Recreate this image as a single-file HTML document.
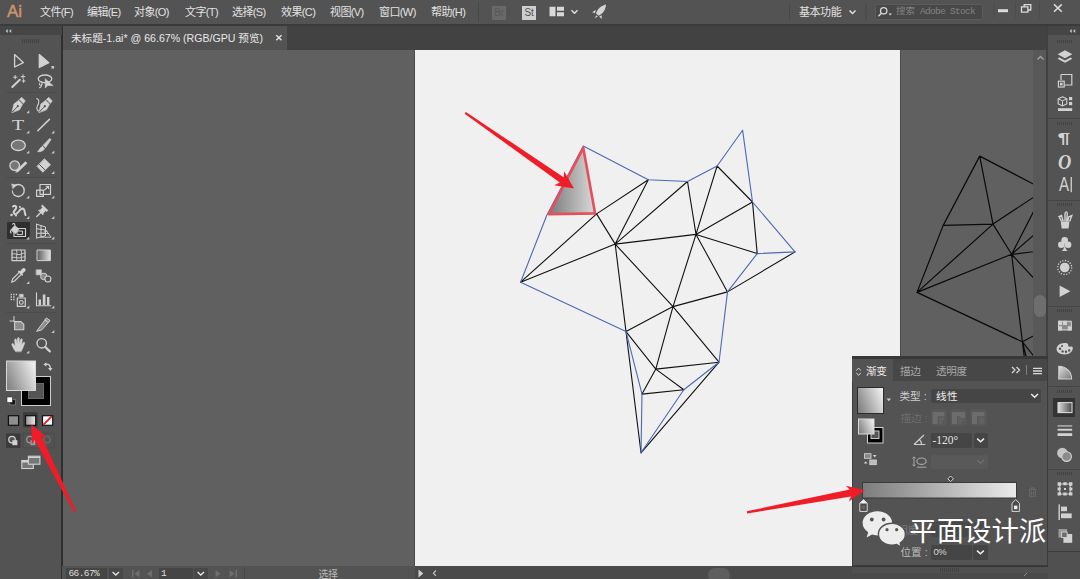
<!DOCTYPE html>
<html lang="zh-CN">
<head>
<meta charset="utf-8">
<title>Adobe Illustrator</title>
<style>
*{box-sizing:border-box;margin:0;padding:0}
html,body{width:1080px;height:579px;overflow:hidden;background:#606060}
body{position:relative;font-family:"Liberation Sans","Noto Sans CJK SC",sans-serif;font-size:12px;color:#dcdcdc}
.abs{position:absolute}
svg{position:absolute;left:0;top:0;overflow:visible}
#menubar{left:0;top:0;width:1080px;height:24px;background:#535353}
#menuline{left:0;top:24px;width:1080px;height:2px;background:#3a3a3a}
.mi{position:absolute;top:2px;height:20px;line-height:20px;font-size:11px;letter-spacing:-.6px;color:#e2e2e2;white-space:nowrap}
#ai{left:7px;top:0;height:24px;line-height:24px;font-size:17px;font-weight:normal;-webkit-text-stroke:.45px #cc966c;color:#cc966c;letter-spacing:0}
#tabbar{left:62px;top:26px;width:986px;height:24px;background:#424242}
#tab{left:63px;top:26px;width:224px;height:24px;background:#535353}
#tabtxt{left:71px;top:28px;height:20px;line-height:20px;font-size:10.6px;color:#e8e8e8;white-space:nowrap}
#tabx{left:273px;top:28px;height:20px;line-height:20px;font-size:11px;color:#e8e8e8;font-weight:bold}
#canvas{left:62px;top:50px;width:971px;height:517px;background:#606060;overflow:hidden}
#artboard{left:414px;top:50px;width:487px;height:516px;background:#f0f0f0;border-left:1px solid #4a4a4a;border-right:1px solid #4a4a4a}
#vscroll{left:1033px;top:50px;width:14px;height:517px;background:#585858}
#vthumb{left:1034px;top:295px;width:12px;height:22px;border-radius:6px;background:#6e6e6e}
#tools{left:0;top:26px;width:63px;height:553px;background:#535353;border-right:2px solid #2f2f2f}
#toolshdr{left:0;top:26px;width:62px;height:9px;background:#454545}
#rdock{left:1046px;top:26px;width:34px;height:553px;background:#535353;border-left:2px solid #404040}
#rdockhdr{left:1048px;top:26px;width:32px;height:9px;background:#454545}
#status{left:62px;top:567px;width:986px;height:12px;background:#535353}
.sep{position:absolute;height:1px;background:#454545}
.grip{position:absolute;height:3px;background:repeating-linear-gradient(90deg,#424242 0 1px,transparent 1px 2px)}
.gripl{position:absolute;height:3px;background:repeating-linear-gradient(90deg,#686868 0 1px,transparent 1px 2px)}
/* gradient panel */
#gp{left:852px;top:356px;width:196px;height:210px;background:#535353;border:1px solid #3c3c3c;border-top:3px solid #383838}
#gphdr{left:852px;top:359px;width:195px;height:22px;background:#474747}
#gptab{left:852px;top:359px;width:41px;height:23px;background:#535353}
.pt{position:absolute;font-size:11px;line-height:16px;height:16px;white-space:nowrap;color:#dedede}
.fld{position:absolute;background:#454545;border-radius:2px}
#wm{left:909.3px;top:514.7px;font-size:27.4px;line-height:34px;height:34px;color:#fff;white-space:nowrap;letter-spacing:0}
</style>
</head>
<body>
<div class="abs" id="canvas"></div>
<div class="abs" id="artboard"></div>
<svg width="1080" height="579" viewBox="0 0 1080 579">
<defs>
<linearGradient id="trig" x1="0" y1="0" x2="1" y2="0"><stop offset="0" stop-color="#7a7a7a"/><stop offset="1" stop-color="#dadada"/></linearGradient>
<clipPath id="cv"><rect x="62" y="50" width="971" height="517"/></clipPath>
</defs>
<g clip-path="url(#cv)">
<path d="M917.0 292.4 L993.0 224.1 M917.0 292.4 L1011.6 254.3 M993.0 224.1 L1044.7 189.9 M993.0 224.1 L1011.6 254.3 M1044.7 189.9 L1011.6 254.3 M1083.9 191.7 L1011.6 254.3 M1083.9 191.7 L1092.4 244.6 M1113.5 176.2 L1092.4 244.6 M1113.5 176.2 L1148.9 212.2 M1148.9 212.2 L1092.4 244.6 M1148.9 212.2 L1153.6 263.8 M1092.4 244.6 L1153.6 263.8 M1092.4 244.6 L1011.6 254.3 M1191.4 262.1 L1123.9 302.1 M1011.6 254.3 L1069.4 316.8 M1011.6 254.3 L1022.4 341.8 M1092.4 244.6 L1069.4 316.8 M1092.4 244.6 L1123.9 302.1 M1069.4 316.8 L1123.9 302.1 M1069.4 316.8 L1022.4 341.8 M1069.4 316.8 L1115.4 372.4 M1069.4 316.8 L1052.2 379.3 M1022.4 341.8 L1052.2 379.3 M1022.4 341.8 L1037.4 463.0 M1052.2 379.3 L1115.4 372.4 M1052.2 379.3 L1080.2 400.0 M1052.2 379.3 L1038.4 404.3 M1038.4 404.3 L1080.2 400.0 M1115.4 372.4 L1037.4 463.0 M917.0 292.4 L943.2 225.4 M943.2 225.4 L979.7 156.1 M979.7 156.1 L1044.7 189.9 M1044.7 189.9 L1083.9 191.7 M1083.9 191.7 L1113.5 176.2 M1113.5 176.2 L1139.0 140.4 M1139.0 140.4 L1148.9 212.2 M1148.9 212.2 L1191.4 262.1 M1191.4 262.1 L1153.6 263.8 M1153.6 263.8 L1123.9 302.1 M1123.9 302.1 L1115.4 372.4 M1115.4 372.4 L1080.2 400.0 M1080.2 400.0 L1037.4 463.0 M1037.4 463.0 L1038.4 404.3 M1038.4 404.3 L1022.4 341.8 M1022.4 341.8 L917.0 292.4 M979.7 156.1 L993.0 224.1 M943.2 225.4 L993.0 224.1" stroke="#0a0a0a" stroke-width="1.2" fill="none" stroke-linecap="round"/>
</g>
<path d="M520.6 282.2 L596.6 213.9 M520.6 282.2 L615.2 244.1 M596.6 213.9 L648.3 179.7 M596.6 213.9 L615.2 244.1 M648.3 179.7 L615.2 244.1 M687.5 181.5 L615.2 244.1 M687.5 181.5 L696.0 234.4 M717.1 166.0 L696.0 234.4 M717.1 166.0 L752.5 202.0 M752.5 202.0 L696.0 234.4 M752.5 202.0 L757.2 253.6 M696.0 234.4 L757.2 253.6 M696.0 234.4 L615.2 244.1 M795.0 251.9 L727.5 291.9 M615.2 244.1 L673.0 306.6 M615.2 244.1 L626.0 331.6 M696.0 234.4 L673.0 306.6 M696.0 234.4 L727.5 291.9 M673.0 306.6 L727.5 291.9 M673.0 306.6 L626.0 331.6 M673.0 306.6 L719.0 362.2 M673.0 306.6 L655.8 369.1 M626.0 331.6 L655.8 369.1 M626.0 331.6 L641.0 452.8 M655.8 369.1 L719.0 362.2 M655.8 369.1 L683.8 389.8 M655.8 369.1 L642.0 394.1 M642.0 394.1 L683.8 389.8 M719.0 362.2 L641.0 452.8" stroke="#111" stroke-width="1.1" fill="none" stroke-linecap="round"/>
<path d="M520.6 282.2 L546.8 215.2 M546.8 215.2 L583.3 145.9 M583.3 145.9 L648.3 179.7 M648.3 179.7 L687.5 181.5 M687.5 181.5 L717.1 166.0 M717.1 166.0 L742.6 130.2 M742.6 130.2 L752.5 202.0 M752.5 202.0 L795.0 251.9 M795.0 251.9 L757.2 253.6 M757.2 253.6 L727.5 291.9 M727.5 291.9 L719.0 362.2 M719.0 362.2 L683.8 389.8 M683.8 389.8 L641.0 452.8 M641.0 452.8 L642.0 394.1 M642.0 394.1 L626.0 331.6 M626.0 331.6 L520.6 282.2" stroke="#4a68b5" stroke-width="1.1" fill="none" stroke-linecap="round"/>
<polygon points="583.3,147.9 548.8,214.2 595.1,213.4" fill="url(#trig)" stroke="#e84e5a" stroke-width="2.6" stroke-linejoin="round"/>
</svg>
<div class="abs" id="vscroll"></div>
<div class="abs" id="vthumb"></div>
<div class="abs" id="menubar"></div>
<div class="abs" id="menuline"></div>
<div class="abs" id="tabbar"></div>
<div class="abs" id="tab"></div>
<div class="abs" id="tabtxt">未标题-1.ai* @ 66.67% (RGB/GPU 预览)</div>
<svg width="1080" height="60" viewBox="0 0 1080 60"><path d="M276.300 35.200 l5.200 5 M281.500 35.200 l-5.200 5" stroke="#e4e4e4" stroke-width="1.400"/></svg>
<div class="abs mi" id="ai">Ai</div>
<div class="mi" style="left:40px">文件(F)</div>
<div class="mi" style="left:87px">编辑(E)</div>
<div class="mi" style="left:134px">对象(O)</div>
<div class="mi" style="left:185px">文字(T)</div>
<div class="mi" style="left:232px">选择(S)</div>
<div class="mi" style="left:281px">效果(C)</div>
<div class="mi" style="left:330px">视图(V)</div>
<div class="mi" style="left:379px">窗口(W)</div>
<div class="mi" style="left:431px">帮助(H)</div>
<div class="abs" style="left:478px;top:2px;width:1px;height:20px;background:#484848"></div>
<div class="abs" style="left:492px;top:5.500px;width:14px;height:14px;background:#696969;color:#585858;font-size:10px;line-height:14px;text-align:center;letter-spacing:-.3px">Br</div>
<div class="abs" style="left:522px;top:5.500px;width:14px;height:14px;background:#cfcfcf;color:#535353;font-size:10px;line-height:14px;text-align:center;letter-spacing:-.3px">St</div>
<svg width="1080" height="26" viewBox="0 0 1080 26">
<path d="M549.500 6.700h6v9.600h-6z M557 6.700h7v4h-7z M557 12.200h7v4.100h-7z" fill="#d8d8d8"/>
<path d="M571.500 10.300 l3 3 l3-3" stroke="#e0e0e0" stroke-width="1.500" fill="none"/>
<path d="M606 4.600 C601.500 5.500 597.500 9 596 13.500 L598.800 15.800 C603 13.800 605.800 9.500 606 4.600Z M595.800 9.800 L592.200 12.200 L595 13.200 Z M601.800 15.200 L601.600 19 L599.200 16.600 Z M596.400 15.200 L594.600 18.200 L597.800 16.600Z" fill="#d4d4d4"/>
<path d="M789.500 3v18M866 3v18" stroke="#484848" stroke-width="1"/>
<path d="M849.500 10.500 l3 3 l3-3" stroke="#e0e0e0" stroke-width="1.500" fill="none"/>
<rect x="875.500" y="4.500" width="107" height="15" rx="2" fill="#484848" stroke="#5c5c5c" stroke-width="1"/>
<circle cx="883.700" cy="10.800" r="3.200" stroke="#d8d8d8" stroke-width="1.300" fill="none"/>
<path d="M881.400 13.300 L878.400 16.300" stroke="#d8d8d8" stroke-width="1.500"/>
<path d="M888.500 13.500 h3.400 l-1.700 2z" fill="#d8d8d8"/>
<path d="M994 2v16M1015.500 2v16M1039.500 2v16" stroke="#4c4c4c" stroke-width="1"/>
<path d="M998 9.200h10v3h-10z" fill="#dcdcdc"/>
<path d="M1021.500 6.800h6.400v5.400h-6.400z M1024.200 6.600v-2h6.600v5.400h-2.600" stroke="#dcdcdc" stroke-width="1.300" fill="none"/>
<path d="M1054 4.400 l7.800 7.400 M1061.800 4.400 l-7.800 7.400" stroke="#dcdcdc" stroke-width="1.500"/>
</svg>
<div class="mi" style="left:799px;letter-spacing:-.45px">基本功能</div>
<div class="abs" style="left:896px;top:4px;height:16px;line-height:16px;font-family:'Liberation Mono','Noto Sans CJK SC',monospace;font-size:9.5px;letter-spacing:-.7px;color:#828282;white-space:nowrap"><span style="letter-spacing:0">搜索</span> Adobe Stock</div>

<div class="abs" id="tools"></div>
<div class="abs" id="toolshdr"></div>
<div class="abs" style="left:7px;top:222px;width:23px;height:17px;background:#2f2f2f;border-radius:1px"></div>
<div class="grip" style="left:22px;top:39px;width:17px;height:3.500px"></div>
<div class="sep" style="background:#4b4b4b;left:6px;top:92px;width:50px"></div>
<div class="sep" style="background:#4b4b4b;left:6px;top:177px;width:50px"></div>
<div class="sep" style="background:#4b4b4b;left:6px;top:243px;width:50px"></div>
<div class="sep" style="background:#4b4b4b;left:6px;top:312px;width:50px"></div>
<svg width="64" height="579" viewBox="0 0 64 579" fill="none" stroke="none">
<defs>
<linearGradient id="tg1" x1="0" y1="0" x2="1" y2="0"><stop offset="0" stop-color="#5e5e5e"/><stop offset="1" stop-color="#e4e4e4"/></linearGradient>
<linearGradient id="tg2" x1="0" y1="0" x2="1" y2="0"><stop offset="0" stop-color="#929292"/><stop offset="1" stop-color="#ececec"/></linearGradient>
<linearGradient id="fillg" x1="0" y1="0.7" x2="1" y2="0.3"><stop offset="0" stop-color="#858585"/><stop offset="1" stop-color="#ececec"/></linearGradient>
</defs>
<!-- collapse arrows -->
<path d="M7.8 29 L5.6 31 L7.800 33 Z M11.2 29 L9 31 L11.2 33 Z" fill="#c4c4c4"/>
<!-- corner flyout triangles -->
<g fill="#c8c8c8">
<path d="M51.5 66h2.6v2.6h-2.6z"/>
<path d="M29.3 110.300 v3h-3z M29.3 130.500 v3h-3z M54.300 130.500 v3h-3z M29.3 150.500 v3h-3z M54.300 150.500 v3h-3z M29.3 171 v3h-3z M54.300 171 v3h-3z M29.3 195.500 v3h-3z M54.300 195.500 v3h-3z M29.3 216 v3h-3z M54.300 216 v3h-3z M29.3 236.500 v3h-3z M54.300 236.500 v3h-3z M29.3 281 v3h-3z M29.3 305.500 v3h-3z M54.300 305.500 v3h-3z M54.300 330 v3h-3z M29.3 350.500 v3h-3z"/>
</g>
<g stroke="#d2d2d2" stroke-width="1.3" stroke-linejoin="round" stroke-linecap="round">
<!-- selection -->
<path d="M14.6 54.600 V67 L23.300 62.600 Z"/>
<!-- direct selection -->
<path d="M39.300 54.600 V67.500 L48.800 62.700 Z" fill="#d2d2d2"/>
<!-- magic wand -->
<path d="M12.300 87 L19.800 79.800" stroke-width="2"/>
<path d="M15.200 75.500v3.400M13.500 77.200h3.400M23 74.800v3.600M21.200 76.600h3.600M23.600 79.600v2.800M22.200 81h2.800" stroke-width="1"/>
<!-- lasso -->
<ellipse cx="45" cy="78.800" rx="6.800" ry="3.800"/>
<path d="M40 81.500c2.500 0 3 2.800 1.200 3.600c-1.300 .5 -2.400-.8-1.500-1.800M41.500 85.200c0 1.200-.8 2.200-2 2.600" stroke-width="1.100"/>
<path d="M45.200 79 L45.200 88 L47.800 85.600 L52.800 85.600 Z" fill="#d2d2d2" stroke-width=".6"/>
<!-- pen -->
<path d="M12 112.200 L14 104 L18.600 100.400 L22.400 104.400 L19.500 109.600 Z" fill="#d2d2d2" stroke-width=".8"/>
<path d="M19.600 99.300 L21.800 97.400 L25.200 100.900 L23.400 103.200 Z" fill="#d2d2d2" stroke-width=".8"/>
<path d="M12.400 111.800 L17.300 106.800" stroke="#535353" stroke-width="1"/>
<circle cx="17.800" cy="106.200" r="1.100" fill="#535353" stroke="none"/>
<!-- curvature pen -->
<path d="M39 112.200 L41 104 L45.600 100.400 L49.400 104.400 L46.500 109.600 Z" fill="#d2d2d2" stroke-width=".8"/>
<path d="M46.600 99.300 L48.800 97.400 L52.200 100.900 L50.400 103.200 Z" fill="#d2d2d2" stroke-width=".8"/>
<path d="M39.400 111.800 L44.300 106.800" stroke="#535353" stroke-width="1"/>
<circle cx="44.800" cy="106.200" r="1.100" fill="#535353" stroke="none"/>
<path d="M36.800 98.500c3 1.200 2.200 4.500.8 7c-1.200 2.300-1 5 1.200 5.800" stroke-width="1.100"/>
<!-- type -->
<text transform="translate(11.900 130.200) scale(1.28 1)" font-family="'Liberation Serif',serif" font-size="15.600" fill="#d2d2d2" stroke="none">T</text>
<!-- line -->
<path d="M37.800 130.800 L49.400 119.400" stroke-width="1.500"/>
<!-- ellipse -->
<ellipse cx="18.300" cy="145.300" rx="7" ry="5.200" fill="#777"/>
<!-- brush -->
<path d="M50 138.600 L51 139.600 L45.600 147.600 L43.200 145.600 Z" fill="#d2d2d2" stroke-width=".7"/>
<path d="M42.400 146.600 L44.600 148.600 C43.600 151.200 40 152 37.600 151.600 C39.600 150.400 39.600 147.600 42.400 146.600Z" fill="#d2d2d2" stroke-width=".7"/>
<!-- shaper -->
<circle cx="14.700" cy="165.600" r="4.800" fill="#777"/>
<path d="M17 171.200 L26.400 162.200" stroke-width="2.600" stroke-linecap="butt"/>
<path d="M16 172.300 l1.800-.4l-1.300-1.400z" fill="#d2d2d2" stroke-width=".5"/>
<!-- eraser -->
<path d="M44.600 159 L50.500 164.800 L42.800 172.200 L37.200 166.600 Z" fill="#d2d2d2" stroke-width=".8"/>
<path d="M39.500 164.500 L45 170" stroke="#535353" stroke-width="1"/>
<!-- rotate -->
<path d="M14 186.200 A6 6 0 1 1 14.600 195.300" stroke-width="1.400"/>
<path d="M11.800 184 L16.600 185 L13 188.600 Z" fill="#d2d2d2" stroke-width=".5"/>
<path d="M14.600 195.300 A6 6 0 0 1 12.400 191" stroke-dasharray="1 1.300" stroke-width="1.300"/>
<!-- scale -->
<rect x="40" y="184.500" width="10.500" height="9.800" stroke-width="1.200"/>
<rect x="36.600" y="190.200" width="6.800" height="6.200" stroke-width="1.200"/>
<path d="M44.500 190 L48.500 186.300 M46 186.300 H48.600 V188.800" stroke-width="1.100"/>
<!-- puppet warp -->
<path d="M13 206.500c2-1.500 4 0 3 2s-3.500 3-2 5s4-1 5.500-3s3.500-2.500 4.500-1s.5 3.500 1.500 5.500" stroke-width="2"/>
<circle cx="11.500" cy="215" r="1.300" fill="#d2d2d2" stroke="none"/><circle cx="20" cy="207" r="1.100" fill="#d2d2d2" stroke="none"/><circle cx="16" cy="215.500" r="1.100" fill="#d2d2d2" stroke="none"/>
<!-- pin -->
<path d="M42.500 205 L48 210.500 L46.500 211.500 L45.500 210.800 L43.300 213.200 L43 215 L38.300 210.200 L40.200 210 L42.500 207.600 L41.600 206.600 Z" fill="#d2d2d2" stroke-width=".6"/>
<path d="M40.500 212.800 L36.800 216.400" stroke-width="1.400"/>
<!-- live paint bucket -->
<rect x="14" y="228.500" width="11.500" height="8" stroke-width="1.100"/>
<rect x="17.500" y="231" width="5" height="3.600" stroke-width="1" />
<path d="M11 229.800 L14.600 225.600 L19 229 L15.600 233.400 Z" fill="#d2d2d2" stroke-width=".7"/>
<path d="M12.500 224.200 c1-1.400 2.600-.6 2.400 1.200" stroke-width="1.100"/>
<path d="M11 230.500c-.8 1.200-.8 2 .1 2.400" stroke-width="1.200"/>
<!-- perspective grid -->
<path d="M36.600 224.200 V238 M36.600 224.200 L45.500 227 V235.800 L36.600 238 M41 225.600 V236.900 M36.600 228.800 L45.500 230 M36.600 233.400 L45.500 233" stroke-width="1"/>
<path d="M45.500 229.500 L50.600 236.600 M41 237.200 H50.800 M43 233.500 H48.500 M44.500 231.300 H47" stroke-width=".9"/>
<!-- mesh -->
<rect x="12" y="250" width="13" height="10.600" stroke-width="1.200"/>
<path d="M12 254c3-1.500 5 1.500 8 .5s3.500-1.500 5-1.500M12 257.500c3-1 5 1 8 .3s3.500-1 5-1M16.500 250c1.500 3-1 6 .5 10.600M21 250c1.500 3-.5 6 .5 10.600" stroke-width=".9"/>
<!-- gradient tool -->
<rect x="37.400" y="250" width="13" height="10.600" fill="url(#tg1)" stroke-width="1"/>
<!-- eyedropper -->
<path d="M11.600 282.200 L12.600 279 L19.500 272.200 L21.500 274.200 L14.600 281 Z" stroke-width="1.100"/>
<path d="M18.800 271.400 L22.300 274.900 M20 272.600 L22.800 269.200 C24 268 25.600 269.600 24.600 270.800 L21.200 273.800" stroke-width="1.500" fill="#d2d2d2"/>
<!-- blend -->
<rect x="36.400" y="269.800" width="5" height="5" fill="#d2d2d2" stroke-width=".6"/>
<circle cx="43.800" cy="276.400" r="3.300" fill="#8a8a8a" stroke-width="1"/>
<circle cx="47.900" cy="279" r="3" fill="#535353" stroke-width="1.100"/>
<!-- symbol sprayer -->
<rect x="17.300" y="298" width="8" height="8.400" stroke-width="1.200"/>
<rect x="19.600" y="294.300" width="3.600" height="2.600" fill="#d2d2d2" stroke-width=".6"/>
<circle cx="21.300" cy="302.400" r="1.900" stroke-width="1.100"/>
<path d="M10.600 294.500h1.300M13.200 294.500h1.300M15.800 294.500h1.300M10.600 297h1.300M13.200 297h1.300M10.600 299.500h1.300M13.200 299.500h1.300" stroke-width="1.300" stroke-linecap="butt"/>
<!-- graph -->
<path d="M36.500 292.800 V305.800 H50.800" stroke-width="1.100"/>
<path d="M38.600 299.500h2.400v5.600h-2.400z M42.800 294.600h2.600v10.500h-2.600z M47 297h2.400v8.100h-2.400z" fill="#d2d2d2" stroke="none"/>
<!-- artboard -->
<path d="M14 316.500 V321 M10 321 H14" stroke-width="1"/>
<path d="M14.600 321.600 H21 L23.800 324.400 V329.800 H14.600 Z" fill="#8c8c8c" stroke-width="1.100"/>
<!-- slice -->
<path d="M36.800 331 L46.400 318 L50 320.600 L42 329.600 Z" fill="#8c8c8c" stroke-width="1"/>
<path d="M45 320 L48.400 322.400" stroke-width="1"/>
<!-- hand -->
<path d="M15.500 351.500 C13.500 349 12.500 346.500 11.800 344.600 C11.500 343.400 13 343 13.800 344.200 L15.200 346.200 L14.600 340 C14.500 338.600 16.200 338.500 16.400 339.800 L17.200 344 L17.400 338.600 C17.500 337.200 19.300 337.200 19.300 338.600 L19.400 344 L20.600 339.400 C21 338.200 22.500 338.600 22.300 339.900 L21.600 345 L23.200 342.600 C24 341.600 25.200 342.400 24.600 343.600 C23.500 346 22.800 349 21.200 351.500 Z" fill="#d2d2d2" stroke-width=".5"/>
<!-- zoom -->
<circle cx="41.700" cy="343.300" r="4.700" stroke-width="1.400"/>
<path d="M45.300 347 L49.800 351.400" stroke-width="2.200"/>
</g>
<!-- fill / stroke swatches -->
<rect x="21.500" y="376.500" width="29" height="29" fill="#000" stroke="#cfcfcf" stroke-width="1"/>
<rect x="28.500" y="383.500" width="15" height="15" fill="#555" stroke="#6a6a6a" stroke-width="1"/>
<rect x="6.500" y="361" width="29" height="29.500" fill="url(#fillg)" stroke="#d8d8d8" stroke-width="1"/>
<!-- swap -->
<path d="M45.500 364.200 C48.800 363.800 50.500 365.500 50.300 368.600" stroke="#d2d2d2" stroke-width="1.300" fill="none"/>
<path d="M43.400 364.400 L46.400 362.200 V366.600 Z M50.300 371 L48 368 H52.500 Z" fill="#d2d2d2"/>
<!-- default fill/stroke -->
<rect x="9.800" y="399.500" width="5.400" height="5.400" fill="#111" stroke="#999" stroke-width=".6"/>
<rect x="7" y="397" width="5.400" height="5.400" fill="#fff" stroke="#333" stroke-width=".6"/>
<!-- colour / gradient / none -->
<rect x="23" y="412.300" width="14.700" height="15" fill="#3b3b3b"/>
<rect x="8.400" y="415.700" width="10.200" height="9.600" fill="#8e8e8e" stroke="#111" stroke-width="1.200"/>
<rect x="25.500" y="415.700" width="10.200" height="9.600" fill="url(#tg2)" stroke="#111" stroke-width="1.200"/>
<rect x="42.500" y="415.700" width="10.200" height="9.600" fill="#fff" stroke="#111" stroke-width="1.200"/>
<path d="M43.400 424.600 L51.800 416.400" stroke="#e0202a" stroke-width="2"/>
<!-- draw modes -->
<rect x="6" y="433.400" width="14.500" height="14.500" fill="#3b3b3b"/>
<circle cx="12" cy="439.600" r="3.300" stroke="#d2d2d2" stroke-width="1.200" fill="#555"/>
<rect x="12.400" y="440.200" width="5" height="5" fill="#d2d2d2"/>
<circle cx="30" cy="439.600" r="3.300" stroke="#9a9a9a" stroke-width="1.200"/>
<rect x="30.400" y="440.200" width="5" height="5" fill="#9a9a9a"/>
<circle cx="47" cy="439.600" r="3.300" stroke="#6c6c6c" stroke-width="1.200"/>
<rect x="23" y="433.400" width="31" height="14.500" stroke="#4b4b4b" stroke-width="1" fill="none"/>
<!-- screen mode -->
<rect x="21.800" y="460.500" width="11.500" height="8" fill="#777" stroke="#d2d2d2" stroke-width="1.100"/>
<rect x="28.400" y="456.200" width="11.500" height="8" fill="#777" stroke="#d2d2d2" stroke-width="1.100"/>
<path d="M28.400 457.400 h11.500 M21.800 461.700 h6.600" stroke="#d2d2d2" stroke-width="1.400"/>
</svg>

<div class="abs" id="rdock"></div>
<div class="abs" id="rdockhdr"></div>
<div class="abs" style="left:1052.500px;top:398px;width:22.500px;height:18.500px;background:#333"></div>
<div class="grip" style="left:1057px;top:40px;width:15px"></div>
<div class="grip" style="left:1057px;top:122px;width:15px"></div>
<div class="grip" style="left:1057px;top:203px;width:15px"></div>
<div class="grip" style="left:1057px;top:309px;width:15px"></div>
<div class="grip" style="left:1057px;top:390px;width:15px"></div>
<div class="grip" style="left:1057px;top:472px;width:15px"></div>
<div class="sep" style="left:1048px;top:118px;width:32px"></div>
<div class="sep" style="left:1048px;top:199.500px;width:32px"></div>
<div class="sep" style="left:1048px;top:305.500px;width:32px"></div>
<div class="sep" style="left:1048px;top:386px;width:32px"></div>
<div class="sep" style="left:1048px;top:468.500px;width:32px"></div>
<div class="abs" style="left:1048px;top:550.500px;width:32px;height:28.500px;background:#505050;border-top:1px solid #3e3e3e"></div>
<div class="abs" style="left:1058px;top:152px;width:16px;height:20px;line-height:20px;font-family:'Liberation Serif',serif;font-style:italic;font-weight:bold;font-size:20.500px;color:#d2d2d2;transform:scaleX(.9);transform-origin:0 50%">O</div>
<svg width="1080" height="579" viewBox="0 0 1080 579" fill="none">
<defs><linearGradient id="rg1" x1="0" y1="0" x2="1" y2="0"><stop offset="0" stop-color="#e0e0e0"/><stop offset="1" stop-color="#4a4a4a"/></linearGradient>
<linearGradient id="rg2" x1="0" y1="0" x2="1" y2="1"><stop offset="0" stop-color="#e0e0e0"/><stop offset="1" stop-color="#777"/></linearGradient></defs>
<path d="M1071.800 29 L1069.600 31 L1071.800 33 Z M1075.200 29 L1073 31 L1075.200 33 Z" fill="#c4c4c4"/>
<path d="M1037.500 59.500 l3-3 l3 3" stroke="#a4a4a4" stroke-width="1.300"/>
<g fill="#d2d2d2">
<!-- layers -->
<path d="M1065 50.200 L1072.400 54.200 L1065 58.200 L1057.600 54.200 Z"/>
<path d="M1059.400 57.600 L1057.600 58.700 L1065 62.800 L1072.400 58.700 L1070.600 57.600 L1065 60.600 Z"/>
<!-- artboards -->
<path d="M1061 74.500 h10.800 v10.500 h-7.300 M1061 80 v-5.500" stroke="#d2d2d2" stroke-width="1.200" fill="none"/>
<rect x="1058.400" y="81.200" width="5.800" height="5.800" fill="#535353" stroke="#d2d2d2" stroke-width="1.200"/>
<rect x="1060" y="82.800" width="2.600" height="2.600"/>
<!-- libraries -->
<path d="M1062.500 96.800 L1066.800 98.800 V103.800 L1062.500 106 L1058.200 103.800 V98.800 Z" fill="none" stroke="#d2d2d2" stroke-width="1.100"/>
<path d="M1058.200 98.800 L1062.500 100.900 L1066.800 98.800 M1062.500 100.900 V106" stroke="#d2d2d2" stroke-width="1" fill="none"/>
<rect x="1069" y="97" width="3.200" height="3.200"/><rect x="1069" y="102" width="3.200" height="3.200"/>
<rect x="1058" y="108.200" width="14.200" height="2.800"/>
<!-- paragraph -->
<text transform="translate(1057.600 142.800) scale(1.52 1)" font-family="'Liberation Sans',sans-serif" font-weight="bold" font-size="15" fill="#d2d2d2">¶</text>
<!-- character A| -->
<text transform="translate(1058.900 191.300) scale(.74 1)" font-family="'Liberation Sans',sans-serif" font-size="20.500" fill="#d2d2d2">A</text>
<rect x="1070.600" y="177" width="1.300" height="15.200"/>
<!-- brushes -->
<path d="M1060.800 221.500 h8.600 l-.8 7 h-7z"/>
<path d="M1063.200 221.500 L1061.500 215.500 L1059 216.500 L1061.600 221.500 M1065 221.500 L1065 213.500 C1065.600 211.400 1067 211.400 1067.300 213.500 L1066.600 221.500 M1067.800 221.500 L1068.600 217 L1071.800 215.600 L1069.600 221.500" stroke="#d2d2d2" stroke-width="1.400" fill="none"/>
<!-- symbols (club) -->
<circle cx="1064.700" cy="240.400" r="3.300"/><circle cx="1061.300" cy="244.800" r="3.300"/><circle cx="1068.100" cy="244.800" r="3.300"/>
<path d="M1064.700 243 c0 4 -1 6.500 -3 8 h6 c-2 -1.500 -3 -4 -3 -8z"/>
<!-- graphic styles -->
<circle cx="1064.700" cy="267.500" r="4.800"/>
<circle cx="1064.700" cy="267.500" r="7" fill="none" stroke="#d2d2d2" stroke-width="1.300" stroke-dasharray="1.200 1.550"/>
<!-- actions -->
<path d="M1059.600 285.500 L1070.400 291.300 L1059.600 297 Z"/>
<!-- swatches -->
<path d="M1058 320.800h13.800v9.600h-13.800z" fill="#8a8a8a"/>
<path d="M1058 320.800h4v4.200h-4z M1063 320.800h3.800v4.200h-3.800z M1058 326.200h4v4.200h-4z M1067.800 326.200h4v4.200h-4z"/>
<path d="M1058.500 321.300h12.800v8.600h-12.800z" fill="none" stroke="#d2d2d2" stroke-width="1"/>
<!-- colour palette -->
<path d="M1064.600 343 C1059.800 343 1056.600 345.800 1056.600 349 C1056.600 352.400 1060 354.400 1064.400 354.400 C1069.400 354.400 1072.800 351.800 1072.800 348 C1072.800 346.600 1071.800 346.200 1070.600 346.600 C1069 347.200 1067.600 346.400 1068.200 344.800 C1068.600 343.600 1066.800 343 1064.600 343Z"/>
<g fill="#535353"><circle cx="1060" cy="348.800" r="1.200"/><circle cx="1062.600" cy="351.400" r="1.200"/><circle cx="1066" cy="351.800" r="1.200"/><circle cx="1069.200" cy="350.400" r="1.200"/><circle cx="1062" cy="346" r="1"/></g>
<!-- colour guide -->
<path d="M1058.800 366.200 C1066 366.200 1071.600 371.600 1071.600 379 H1058.800 Z" fill="url(#rg2)" stroke="#d2d2d2" stroke-width="1.100"/>
<!-- gradient -->
<rect x="1058" y="402.600" width="14" height="10" fill="url(#rg1)" stroke="#d8d8d8" stroke-width="1.100"/>
<!-- stroke -->
<rect x="1057.600" y="425.400" width="14.600" height="1.100"/><rect x="1057.600" y="428.800" width="14.600" height="1.900"/><rect x="1057.600" y="433.200" width="14.600" height="2.800"/>
<!-- transparency -->
<circle cx="1062.400" cy="453" r="5.300" fill="#c4c4c4"/>
<circle cx="1066.600" cy="456.600" r="4.800" fill="#8a8a8a" stroke="#d2d2d2" stroke-width="1.100"/>
<!-- transform -->
<rect x="1059.800" y="484" width="10.400" height="10" fill="none" stroke="#d2d2d2" stroke-width="1"/>
<path d="M1057.600 482.300h3.400v3.400h-3.400z M1063.300 482.300h3.400v3h-3.400z M1069 482.300h3.400v3.400h-3.400z M1057.600 487.400h3v3.200h-3z M1069.400 487.400h3v3.200h-3z M1057.600 492.200h3.400v3.400h-3.400z M1063.300 492.600h3.400v3h-3.400z M1069 492.200h3.400v3.400h-3.400z M1064 488h2v2h-2z"/>
<!-- align -->
<rect x="1058.500" y="504.400" width="1.400" height="15.600"/>
<rect x="1061" y="506.600" width="6" height="4.600"/><rect x="1061" y="513.400" width="10.700" height="4.800"/>
<!-- pathfinder -->
<rect x="1058.500" y="529" width="8.600" height="8.600" fill="#9a9a9a"/>
<rect x="1063.400" y="534" width="8.800" height="8.800"/>
<rect x="1061.600" y="532" width="5.500" height="5.600" fill="#6e6e6e" stroke="#d2d2d2" stroke-width=".9"/>
</g>
</svg>

<div class="abs" id="status"></div>
<div class="abs" style="left:62px;top:566px;width:353px;height:13px;background:#535353"></div>
<div class="abs" style="left:415px;top:566px;width:633px;height:13px;background:#4a4a4a"></div>
<div class="abs" style="left:708px;top:567.500px;width:22px;height:14px;border-radius:7px;background:#5e5e5e"></div>
<div class="abs" style="left:66px;top:567.500px;width:41px;height:12px;background:#454545"></div>
<div class="abs" style="left:109px;top:567.500px;width:13.500px;height:12px;background:#484848"></div>
<div class="abs" style="left:159px;top:567.500px;width:33.500px;height:12px;background:#454545"></div>
<div class="abs" style="left:194px;top:567.500px;width:13.500px;height:12px;background:#484848"></div>
<div class="abs" style="left:68.500px;top:567px;height:14px;line-height:14px;font-family:'Liberation Mono',monospace;font-size:9.500px;letter-spacing:-.6px;color:#dcdcdc;white-space:nowrap">66.67%</div>
<div class="abs" style="left:161px;top:567px;height:14px;line-height:14px;font-family:'Liberation Mono',monospace;font-size:9.500px;color:#dcdcdc">1</div>
<div class="abs" style="left:318.500px;top:566.500px;height:15px;line-height:15px;font-size:10px;color:#b8b8b8;white-space:nowrap;letter-spacing:-.5px">选择</div>
<svg width="1080" height="579" viewBox="0 0 1080 579" fill="none">
<path d="M112.600 572 l3.200 3 l3.200-3 M197.600 572 l3.200 3 l3.200-3" stroke="#e4e4e4" stroke-width="1.400"/>
<g fill="#6e6e6e"><path d="M132 570h1.500v7.500h-1.500z M139.500 570v7.500l-5-3.750z M152 570v7.500l-5-3.750z M215.500 570v7.500l5-3.750z M229.500 570v7.500l5-3.750z M235.500 570h1.500v7.500h-1.500z"/></g>
<path d="M244.500 567v12" stroke="#474747" stroke-width="1"/>
<path d="M418.500 569.600 v7.800 l4.800-3.900z" fill="#d0d0d0"/>
<path d="M436 570.500 l-2.600 2.700 l2.600 2.700" stroke="#c4c4c4" stroke-width="1.200"/>
</svg>

<div class="abs" id="gp"></div>
<div class="abs" id="gphdr"></div>
<div class="abs" id="gptab"></div>
<div class="abs" style="left:852px;top:565.500px;width:196px;height:7.500px;background:#505050;border-top:1px solid #353535"></div>
<div class="grip" style="left:940px;top:568.200px;width:19px;height:3.500px"></div>
<div class="pt" style="left:866px;top:363px;color:#ececec;font-size:10.600px;letter-spacing:-.4px">渐变</div>
<div class="pt" style="left:900px;top:363px;color:#a8a8a8;font-size:10.600px;letter-spacing:-.4px">描边</div>
<div class="pt" style="left:936px;top:363px;color:#a8a8a8;font-size:10.600px;letter-spacing:-.4px">透明度</div>
<div class="pt" style="left:899.500px;top:388px;color:#cfcfcf;font-size:10.600px">类型 :</div>
<div class="pt" style="left:900.500px;top:410px;color:#6d6d6d;font-size:10.600px">描边 :</div>
<div class="fld" style="left:931px;top:388.500px;width:110px;height:14px"></div>
<div class="pt" style="left:936px;top:387.500px;color:#ececec;font-size:10.600px;letter-spacing:.3px">线性</div>
<div class="fld" style="left:931px;top:409px;width:16px;height:17px;background:#585858"></div>
<div class="fld" style="left:950px;top:409px;width:17px;height:17px;background:#585858"></div>
<div class="fld" style="left:970px;top:409px;width:16.500px;height:17px;background:#585858"></div>
<div class="fld" style="left:931px;top:432.500px;width:40.500px;height:15px"></div>
<div class="fld" style="left:974px;top:432.500px;width:13.500px;height:15px"></div>
<div class="pt" style="left:932.500px;top:432px;color:#e6e6e6;font-family:'Liberation Serif','Noto Serif CJK SC',serif;font-size:11.500px">-120°</div>
<div class="fld" style="left:931px;top:454.500px;width:57px;height:14px;background:#595959"></div>
<div class="fld" style="left:931px;top:522px;width:40.500px;height:15px;background:#494949"></div>
<div class="fld" style="left:974px;top:522px;width:13.500px;height:15px;background:#494949"></div>
<div class="pt" style="left:876px;top:521.500px;color:#7c7c7c;font-size:10.600px">不透明度 :</div>
<div class="fld" style="left:931px;top:544.500px;width:40.500px;height:15px"></div>
<div class="fld" style="left:973px;top:544.500px;width:14.500px;height:15px"></div>
<div class="pt" style="left:900.500px;top:543.500px;color:#bdbdbd;font-size:10.600px">位置 :</div>
<div class="pt" style="left:933.500px;top:543.500px;color:#d4d4d4;font-size:9.500px;letter-spacing:-.6px">0%</div>
<svg width="1080" height="579" viewBox="0 0 1080 579" fill="none">
<defs>
<linearGradient id="pg1" x1="0" y1="0" x2="1" y2="0"><stop offset="0" stop-color="#7c7c7c"/><stop offset="1" stop-color="#ebebeb"/></linearGradient>
<linearGradient id="pg2" x1="0" y1="0.7" x2="1" y2="0.3"><stop offset="0" stop-color="#828282"/><stop offset="1" stop-color="#ececec"/></linearGradient>
</defs>
<!-- header icons -->
<path d="M856.400 370.600 l2.200-2.600 l2.200 2.600 M856.400 372.800 l2.200 2.600 l2.200-2.600" stroke="#cfcfcf" stroke-width="1"/>
<path d="M1012 367 l3 3 l-3 3 M1016.500 367 l3 3 l-3 3" stroke="#d8d8d8" stroke-width="1.300"/>
<path d="M1026.500 365v10" stroke="#808080" stroke-width="1"/>
<path d="M1033 368.300h9M1033 371h9M1033 373.700h9" stroke="#d8d8d8" stroke-width="1.300"/>
<!-- swatch -->
<rect x="857.500" y="387.500" width="26" height="26" fill="url(#pg2)" stroke="#2b2b2b" stroke-width="1"/>
<path d="M886.600 398.600h4.400l-2.200 2.600z" fill="#cfcfcf"/>
<!-- fill/stroke mini -->
<rect x="867.500" y="427.500" width="15.500" height="15.500" fill="#000" stroke="#cfcfcf" stroke-width="1"/>
<rect x="871" y="431" width="8" height="7.500" fill="#555" stroke="#c8c8c8" stroke-width="1"/>
<rect x="858.500" y="419" width="15.500" height="15" fill="url(#pg2)" stroke="#d8d8d8" stroke-width="1"/>
<!-- reverse gradient -->
<rect x="864.500" y="453.700" width="6.500" height="4.600" fill="#888" stroke="#cfcfcf" stroke-width=".9"/>
<rect x="869.800" y="460" width="6.500" height="4.600" fill="#bbb" stroke="#cfcfcf" stroke-width=".9"/>
<path d="M872.800 455 h3.800 l-1.900 2.400z M863.800 463.600 h3.800 l-1.900-2.400z" fill="#cfcfcf"/>
<!-- type chevron -->
<path d="M1031.200 394 l3.400 3.200 l3.400-3.200" stroke="#ececec" stroke-width="1.500"/>
<!-- stroke buttons (disabled) -->
<g fill="#6c6c6c">
<path d="M932.600 412h12v4.200h-6.800v7.800h-5.200z"/><path d="M939.200 417.600h5.400v2.400h-3v4h-2.400z" fill="#636363"/>
<path d="M952 412h13v6.200h-4.600v-2h-3.400v7.800h-5z"/><path d="M958.400 417.600h2v2h4.600v1.400h-4v3h-2.600z" fill="#616161"/>
<path d="M972 412h12.500v4.200h-7.500v7.800h-5z"/><path d="M978.400 417.600h6.100v6.400h-6.100z" fill="#616161"/>
</g>
<!-- angle icon -->
<path d="M914 444.500 L924 435 M914 444.500 H925.300 M921.500 444.500 A7.500 7.500 0 0 0 919.400 439.300" stroke="#cfcfcf" stroke-width="1.200"/>
<path d="M977.200 438.600 l3.400 3.200 l3.400-3.200" stroke="#ececec" stroke-width="1.500"/>
<!-- aspect icon -->
<ellipse cx="921.500" cy="461.200" rx="4.600" ry="3.200" stroke="#a8a8a8" stroke-width="1.200"/>
<path d="M914 457v9M912.600 458.400l1.400-1.600l1.400 1.600M912.600 464.600l1.400 1.600l1.400-1.600M917 467.200h9.500" stroke="#a8a8a8" stroke-width="1"/>
<path d="M977.200 460 l3.400 3.200 l3.400-3.200" stroke="#6e6e6e" stroke-width="1.400"/>
<!-- diamond -->
<path d="M950.600 476 l2.800 2.800 l-2.800 2.800 l-2.800-2.800z" fill="#3c3c3c" stroke="#d8d8d8" stroke-width="1"/>
<!-- gradient bar -->
<rect x="862.500" y="482.500" width="154" height="15.500" fill="url(#pg1)" stroke="#3a3a3a" stroke-width="1"/>
<!-- stops -->
<path d="M859.800 511.400 V503.200 L863.500 499.600 L867.200 503.200 V511.400 Z" fill="#4a4a4a" stroke="#d8d8d8" stroke-width="1"/>
<path d="M860 503.400 L863.500 499.800 L867 503.400 Z" fill="#f4f4f4"/>
<rect x="861.800" y="505.600" width="3.400" height="3.600" fill="#7a5c5c"/>
<path d="M1012 511.400 V503.200 L1015.700 499.600 L1019.400 503.200 V511.400 Z" fill="#4a4a4a" stroke="#d8d8d8" stroke-width="1"/>
<rect x="1014" y="505.600" width="3.400" height="3.600" fill="#f0f0f0"/>
<!-- trash -->
<path d="M1029 489.500h7M1030.800 489.500v-1.600h3.400v1.600M1029.600 489.500v6.800h5.800v-6.800M1031.500 491v4M1033.500 491v4" stroke="#6a6a6a" stroke-width="1"/>
<!-- position chevron -->
<path d="M977 550.600 l3.400 3.200 l3.400-3.200" stroke="#ececec" stroke-width="1.500"/>
<path d="M977.200 528 l3.400 3.200 l3.400-3.200" stroke="#7a7a7a" stroke-width="1.400"/>
<!-- resize -->
<path d="M1024 576l3-3" stroke="#8a8a8a" stroke-width="1"/>
<!-- wechat watermark -->
<g>
<path d="M877.400 511.200 C869 511.200 862.600 516.400 862.600 523 C862.600 526.800 864.800 530 868.200 532.200 L866.600 537.600 L872 534.600 C873.600 535 875.400 535.400 877.400 535.400 C885.700 534.800 892.200 529.600 892.200 523 C892.200 516.400 885.700 511.200 877.400 511.200Z" fill="#ededed"/>
<circle cx="871.800" cy="519.500" r="1.900" fill="#555"/><circle cx="883.600" cy="519.500" r="1.900" fill="#555"/>
<path d="M892 523.200 C884.600 523.200 878.400 528 878.400 534.200 C878.400 540.400 884.600 545.200 892 545.200 C893.600 545.200 895.200 545 896.600 544.500 L901.400 547.200 L900.200 543 C903.400 541 905.400 537.900 905.400 534.200 C905.400 528 899.300 523.200 892 523.200Z" fill="#ededed" stroke="#535353" stroke-width="1.400"/>
<circle cx="887" cy="529.700" r="1.600" fill="#555"/><circle cx="896.700" cy="529.700" r="1.600" fill="#555"/>
</g>
</svg>
<div class="abs" id="wm">平面设计派</div>

<svg width="1080" height="579" viewBox="0 0 1080 579">
<polygon fill="#f01c28" points="31.3,424.6 46.8,437.0 41.5,436.3 76.2,511.7 74.2,512.7 34.5,439.8 31.9,444.4"/>
<polygon fill="#f01c28" points="574.0,188.5 554.3,185.3 559.8,182.6 464.7,113.7 465.9,111.9 563.6,177.2 564.1,171.2"/>
<polygon fill="#f01c28" points="865.0,490.3 848.8,501.5 850.9,496.5 747.2,513.5 746.8,511.3 849.6,489.6 845.8,485.8"/>
</svg>
</body>
</html>
